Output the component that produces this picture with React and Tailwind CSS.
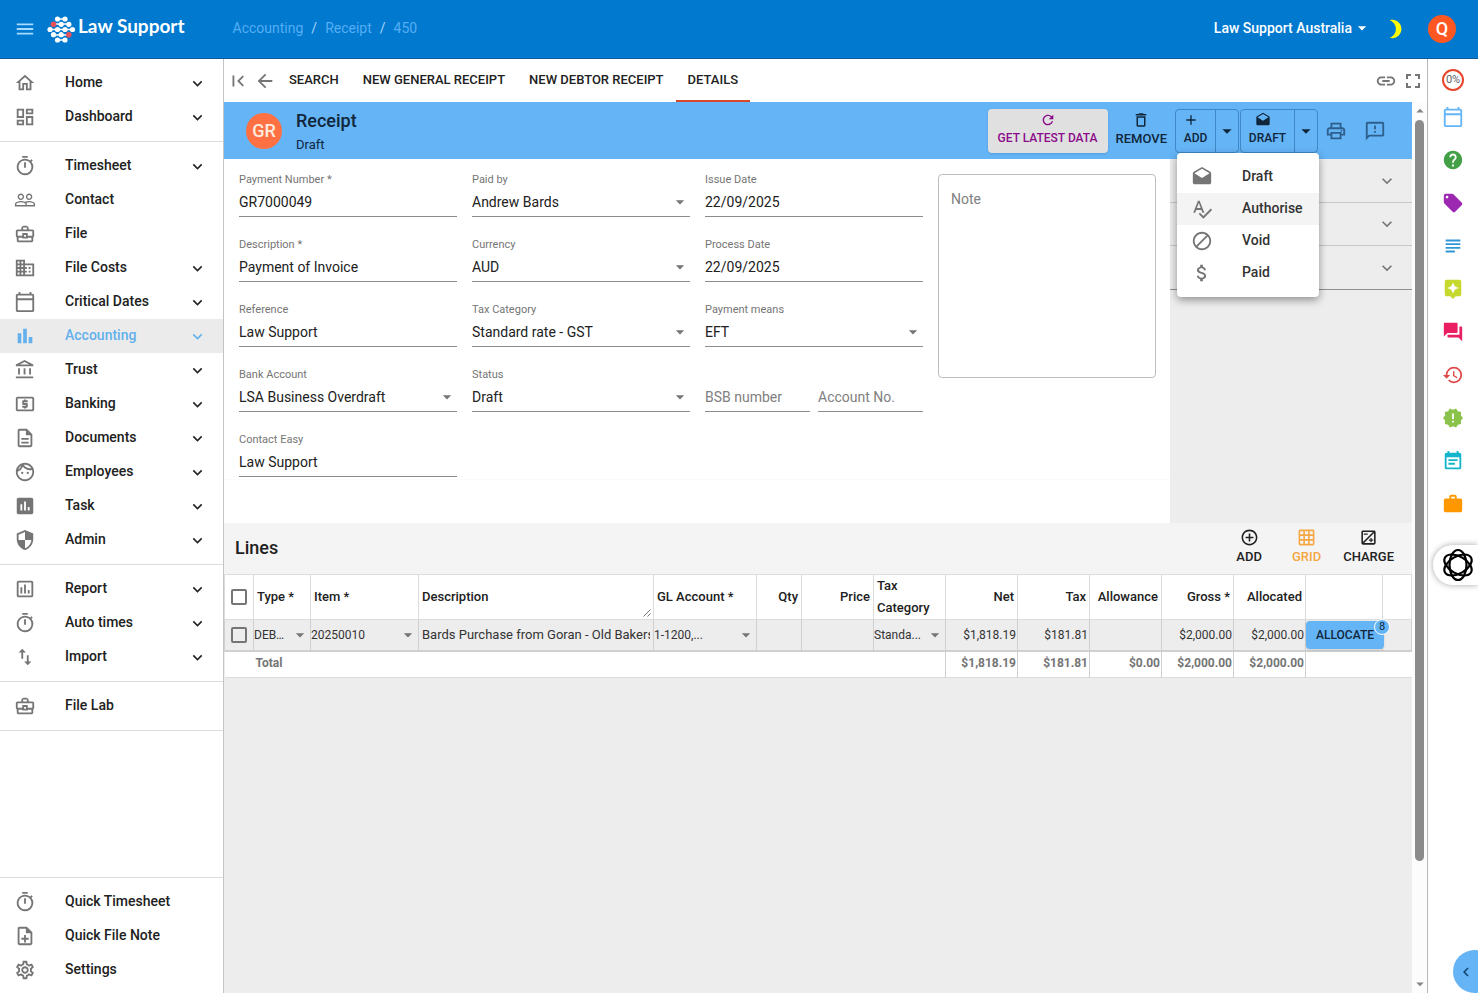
import React, { useState } from 'react';
import {
  MdMenu, MdOutlineHome, MdOutlineDashboard, MdOutlineTimer, MdPeopleOutline, MdOutlineBusinessCenter,
  MdBusiness, MdOutlineCalendarToday, MdBarChart, MdOutlineAccountBalance, MdOutlineLocalAtm,
  MdOutlineDescription, MdOutlineFace, MdAssessment, MdOutlineAssessment, MdSecurity, MdImportExport,
  MdOutlineNoteAdd, MdOutlineSettings, MdExpandMore, MdFirstPage, MdArrowBack, MdLink, MdFullscreen,
  MdRefresh, MdDeleteOutline, MdAdd, MdDrafts, MdArrowDropDown, MdArrowDropUp, MdOutlinePrint,
  MdOutlineFeedback, MdSpellcheck, MdDoNotDisturbAlt, MdAttachMoney, MdBrightness3, MdHelp, MdLocalOffer,
  MdSubject, MdAssistant, MdQuestionAnswer, MdHistory, MdNewReleases, MdEventNote, MdWork,
  MdControlPoint, MdGridOn, MdOutlineExposure, MdChevronLeft,
} from 'react-icons/md';

const navSections = [
  [
    { label: 'Home', icon: MdOutlineHome, expands: true },
    { label: 'Dashboard', icon: MdOutlineDashboard, expands: true },
  ],
  [
    { label: 'Timesheet', icon: MdOutlineTimer, expands: true },
    { label: 'Contact', icon: MdPeopleOutline },
    { label: 'File', icon: MdOutlineBusinessCenter },
    { label: 'File Costs', icon: MdBusiness, expands: true },
    { label: 'Critical Dates', icon: MdOutlineCalendarToday, expands: true },
    { label: 'Accounting', icon: MdBarChart, expands: true, active: true },
    { label: 'Trust', icon: MdOutlineAccountBalance, expands: true },
    { label: 'Banking', icon: MdOutlineLocalAtm, expands: true },
    { label: 'Documents', icon: MdOutlineDescription, expands: true },
    { label: 'Employees', icon: MdOutlineFace, expands: true },
    { label: 'Task', icon: MdAssessment, expands: true },
    { label: 'Admin', icon: MdSecurity, expands: true },
  ],
  [
    { label: 'Report', icon: MdOutlineAssessment, expands: true },
    { label: 'Auto times', icon: MdOutlineTimer, expands: true },
    { label: 'Import', icon: MdImportExport, expands: true },
  ],
  [{ label: 'File Lab', icon: MdOutlineBusinessCenter }],
];

const quickLinks = [
  { label: 'Quick Timesheet', icon: MdOutlineTimer },
  { label: 'Quick File Note', icon: MdOutlineNoteAdd },
  { label: 'Settings', icon: MdOutlineSettings },
];

const railItems = [
  { label: 'Calendar', icon: MdOutlineCalendarToday, color: 'text-[#64b5f6]' },
  { label: 'Help', icon: MdHelp, color: 'text-[#43a047]' },
  { label: 'Tags', icon: MdLocalOffer, color: 'text-[#9c27b0]' },
  { label: 'Notes', icon: MdSubject, color: 'text-[#2f96d8]' },
  { label: 'Assistant', icon: MdAssistant, color: 'text-[#c6d92f]' },
  { label: 'Messages', icon: MdQuestionAnswer, color: 'text-[#e91e63]' },
  { label: 'History', icon: MdHistory, color: 'text-[#e04848]' },
  { label: 'Alerts', icon: MdNewReleases, color: 'text-[#8bc34a]' },
  { label: 'Events', icon: MdEventNote, color: 'text-[#12b5cb]' },
  { label: 'Work', icon: MdWork, color: 'text-[#ff9800]' },
];

const statusOptions = [
  { label: 'Draft', icon: MdDrafts },
  { label: 'Authorise', icon: MdSpellcheck, active: true },
  { label: 'Void', icon: MdDoNotDisturbAlt },
  { label: 'Paid', icon: MdAttachMoney },
];

const NavItem = ({ label, icon: Icon, expands, active }) => (
  <a
    href="#"
    className={`flex h-[34px] items-center pl-3.5 pr-4 text-sm font-medium ${active ? 'bg-[#ebebeb] text-[#64b0ec]' : 'text-[#212121]'}`}
  >
    <Icon size={22} className={active ? 'text-[#64b0ec]' : 'text-[#757575]'} />
    <span className="ml-[29px] flex-1 pb-0.5">{label}</span>
    {expands && <MdExpandMore size={19} />}
  </a>
);

const Logo = () => (
  <a href="#" className="flex items-center text-white">
    <svg width="29" height="27" viewBox="0 0 29 27" stroke="#fff" strokeWidth="1.6" fill="#fff">
      <path d="M11 3h7M8 8h14M3 13.5h22M8 19h14M11 24h7" />
      <g stroke="none">
        <circle cx="10.5" cy="3" r="2.6" />
        <circle cx="18" cy="3" r="2.6" />
        <circle cx="6.5" cy="8.3" r="2.8" fill="#e8505b" />
        <circle cx="14.2" cy="8.3" r="2.6" />
        <circle cx="21.8" cy="8.3" r="2.6" />
        <circle cx="3" cy="13.5" r="2.6" />
        <circle cx="10.5" cy="13.5" r="2.6" />
        <circle cx="18" cy="13.5" r="2.6" />
        <circle cx="25.5" cy="13.5" r="2.6" />
        <circle cx="6.5" cy="18.7" r="2.6" />
        <circle cx="14.2" cy="18.7" r="2.6" />
        <circle cx="21.8" cy="18.7" r="2.8" fill="#e8505b" />
        <circle cx="10.5" cy="24" r="2.6" />
        <circle cx="18" cy="24" r="2.6" />
      </g>
    </svg>
    <span className="mb-1.5 ml-0.5 font-['Lato'] text-[19px] font-bold">Law Support</span>
  </a>
);

const Header = () => (
  <header className="flex h-[59px] items-center border-b border-[#0b5c9c] bg-[#0079cf] pl-3.5 pr-[22px]">
    <button aria-label="Menu" className="mr-[11px] text-[#a5dcff]"><MdMenu size={22} /></button>
    <Logo />
    <nav aria-label="Breadcrumb" className="ml-12 flex gap-2 pb-0.5 text-sm text-[#55aef5]">
      <a href="#">Accounting</a>
      <span className="text-[#a5d5fa]">/</span>
      <a href="#">Receipt</a>
      <span className="text-[#a5d5fa]">/</span>
      <a href="#">450</a>
    </nav>
    <button className="ml-auto flex items-center pb-0.5 text-sm font-medium text-white">
      Law Support Australia <MdArrowDropDown size={20} />
    </button>
    <button aria-label="Dark mode" className="ml-3 text-[#ffff00]"><MdBrightness3 size={22} /></button>
    <button className="ml-[22px] size-7 rounded-full bg-[#ff5722] text-lg leading-7 font-medium text-white">Q</button>
  </header>
);

const Sidebar = () => (
  <aside className="flex w-56 shrink-0 flex-col border-r border-[#c4c4c4] bg-white">
    <nav>
      {navSections.map((items, i) => (
        <div key={i} className="border-b border-[#dcdcdc] py-[7px]">
          {items.map((item) => <NavItem key={item.label} {...item} />)}
        </div>
      ))}
    </nav>
    <nav className="mt-auto border-t border-[#dcdcdc] pt-[7px] pb-1.5">
      {quickLinks.map((item) => <NavItem key={item.label} {...item} />)}
    </nav>
  </aside>
);

const Tabs = () => (
  <div className="flex h-[43px] items-stretch pl-[3px] pr-0.5 text-[13px] font-medium text-[#212121]">
    <button aria-label="First" className="text-[#757575]"><MdFirstPage size={22} /></button>
    <button aria-label="Back" className="mr-px ml-[5px] text-[#757575]"><MdArrowBack size={22} /></button>
    <a href="#" className="px-3 leading-[42px]">SEARCH</a>
    <a href="#" className="px-3 leading-[42px]">NEW GENERAL RECEIPT</a>
    <a href="#" className="px-3 leading-[42px]">NEW DEBTOR RECEIPT</a>
    <a href="#" className="border-b-2 border-[#d6492a] px-3 leading-[42px]">DETAILS</a>
    <button aria-label="Copy link" className="ml-auto text-[#757575]"><MdLink size={22} /></button>
    <button aria-label="Full screen" className="ml-1 text-[#757575]"><MdFullscreen size={24} /></button>
  </div>
);

const StatusMenu = () => (
  <ul role="menu" className="absolute top-full -right-px z-10 w-[142px] rounded bg-white py-2 shadow-[0_3px_8px_rgba(0,0,0,0.4)]">
    {statusOptions.map(({ label, icon: Icon, active }) => (
      <li key={label} role="none">
        <button
          role="menuitem"
          className={`flex h-8 w-full items-center pl-3.5 text-sm text-[#333] ${active ? 'bg-[#f4f4f4]' : ''}`}
        >
          <Icon size={22} className="text-[#757575]" />
          <span className="ml-[29px] pb-0.5">{label}</span>
        </button>
      </li>
    ))}
  </ul>
);

const ActionBar = () => {
  const [open, setOpen] = useState(true);

  return (
    <div className="flex h-[57px] items-center bg-[#64b4f6] pt-px pl-[22px] pr-[26px] text-[#10263b]">
      <div className="size-9 rounded-full bg-[#ff7043] text-center text-lg leading-9 font-medium text-[#ffeadf]">GR</div>
      <div className="ml-3.5 flex-1 pt-1">
        <h1 className="text-lg leading-6 font-medium">Receipt</h1>
        <p className="text-[13px] leading-6">Draft</p>
      </div>
      <div className="flex items-center text-xs leading-4 font-medium">
        <button className="flex h-11 flex-col items-center gap-0.5 rounded bg-[#e0e0e0] px-2.5 pt-[3px] text-[#8b0a8b] shadow">
          <MdRefresh size={16} />
          GET LATEST DATA
        </button>
        <button className="mx-2 flex flex-col items-center gap-0.5 pb-1 text-[13px]">
          <MdDeleteOutline size={18} />
          REMOVE
        </button>
        <div className="flex h-11 divide-x divide-[#3f88c5] rounded border border-[#3f88c5]">
          <button className="flex w-10 flex-col items-center gap-0.5 pt-0.5">
            <MdAdd size={16} className="mr-2.5" />
            ADD
          </button>
          <button aria-label="More add options" className="w-[22px]"><MdArrowDropDown size={22} /></button>
        </div>
        <div className="relative ml-px">
          <div className="flex h-11 divide-x divide-[#3f88c5] rounded border border-[#3f88c5]">
            <button className="flex w-[54px] flex-col items-center gap-0.5 pt-0.5">
              <MdDrafts size={16} className="mr-2.5" />
              DRAFT
            </button>
            <button aria-label="Change status" className="w-[22px]" onClick={() => setOpen(!open)}>
              <MdArrowDropDown size={22} />
            </button>
          </div>
          {open && <StatusMenu />}
        </div>
        <button aria-label="Print" className="ml-[7px] text-[#2e5f8c]"><MdOutlinePrint size={22} /></button>
        <button aria-label="Feedback" className="ml-[17px] text-[#2e5f8c]"><MdOutlineFeedback size={22} /></button>
      </div>
    </div>
  );
};

const TextField = ({ id, label, value }) => (
  <div>
    <label htmlFor={id} className="block h-4 text-[11px] leading-4 text-[#757575]">{label}</label>
    <input id={id} defaultValue={value} className="block h-[29px] w-full border-b border-[#8c8c8c] text-sm text-[#212121] outline-none" />
  </div>
);

const SelectField = ({ id, label, value }) => (
  <div>
    <label htmlFor={id} className="block h-4 text-[11px] leading-4 text-[#757575]">{label}</label>
    <div className="flex items-center border-b border-[#8c8c8c]">
      <select id={id} className="h-7 min-w-0 flex-1 appearance-none text-sm text-[#212121] outline-none">
        <option>{value}</option>
      </select>
      <MdArrowDropDown size={20} className="pointer-events-none text-[#757575]" />
    </div>
  </div>
);

const BlankField = ({ label }) => (
  <input
    aria-label={label}
    placeholder={label}
    className="mt-4 h-[29px] w-full min-w-0 border-b border-[#8c8c8c] text-sm outline-none placeholder:text-[#808080]"
  />
);

const ReceiptForm = () => (
  <form className="min-w-0 flex-1 bg-white">
    <div className="grid grid-cols-4 gap-x-[15px] gap-y-5 pt-[13px] pr-3.5 pl-[15px]">
      <TextField id="number" label="Payment Number *" value="GR7000049" />
      <SelectField id="paidBy" label="Paid by" value="Andrew Bards" />
      <TextField id="issueDate" label="Issue Date" value="22/09/2025" />
      <textarea
        aria-label="Note"
        placeholder="Note"
        className="row-span-4 mt-0.5 h-[204px] resize-none rounded border border-[#bdbdbd] px-3 py-3.5 text-sm outline-none placeholder:text-[#808080]"
      />
      <TextField id="description" label="Description *" value="Payment of Invoice" />
      <SelectField id="currency" label="Currency" value="AUD" />
      <TextField id="processDate" label="Process Date" value="22/09/2025" />
      <TextField id="reference" label="Reference" value="Law Support" />
      <SelectField id="taxCategory" label="Tax Category" value="Standard rate - GST" />
      <SelectField id="means" label="Payment means" value="EFT" />
      <SelectField id="bank" label="Bank Account" value="LSA Business Overdraft" />
      <SelectField id="status" label="Status" value="Draft" />
      <div className="flex gap-2">
        <BlankField label="BSB number" />
        <BlankField label="Account No." />
      </div>
      <TextField id="contact" label="Contact Easy" value="Law Support" />
    </div>
    <div className="mt-0.5 h-11 border-t border-[#fafafa]" />
  </form>
);

const SidePanels = () => (
  <aside className="w-[242px] shrink-0 bg-[#ededed] pt-px">
    {['Details', 'Notes', 'History'].map((name) => (
      <button
        key={name}
        aria-label={name}
        className="flex h-[43px] w-full items-center justify-end border-b border-[#c8c8c8] pr-[15px] text-[#757575] last:h-11 last:border-[#909090]"
      >
        <MdExpandMore size={20} />
      </button>
    ))}
  </aside>
);

const LinesToolbar = () => (
  <div className="flex h-[51px] items-center bg-[#f4f4f4] pl-[11px] pr-[18px] pb-0.5 text-[13px] leading-5 font-medium text-[#212121]">
    <h2 className="flex-1 text-lg">Lines</h2>
    <div className="flex gap-[30px]">
      <button className="flex flex-col items-center"><MdControlPoint size={19} />ADD</button>
      <button className="flex flex-col items-center text-[#f5a742]"><MdGridOn size={19} />GRID</button>
      <button className="-ml-2 flex flex-col items-center"><MdOutlineExposure size={19} />CHARGE</button>
    </div>
  </div>
);

const Checkbox = ({ label }) => (
  <input type="checkbox" aria-label={label} className="mx-auto block size-4 appearance-none rounded-xs border-2 border-[#757575]" />
);

const CellSelect = ({ label, value }) => (
  <div className="flex items-center">
    <select aria-label={label} className="h-7 min-w-0 flex-1 appearance-none text-ellipsis outline-none">
      <option>{value}</option>
    </select>
    <MdArrowDropDown size={20} className="pointer-events-none shrink-0 text-[#757575]" />
  </div>
);

const LinesTable = () => (
  <table className="w-full table-fixed border-collapse text-xs text-[#333] [&_td]:border-x [&_td]:border-[#d0d0d0] [&_th]:border [&_th]:border-[#dcdcdc]">
    <colgroup>
      <col className="w-[29px]" />
      <col className="w-[57px]" />
      <col className="w-[108px]" />
      <col />
      <col className="w-[103px]" />
      <col className="w-[45px]" />
      <col className="w-[72px]" />
      <col className="w-[72px]" />
      <col className="w-[72px]" />
      <col className="w-[72px]" />
      <col className="w-[72px]" />
      <col className="w-[72px]" />
      <col className="w-[72px]" />
      <col className="w-[77px]" />
      <col className="w-[29px]" />
    </colgroup>
    <thead className="bg-white text-[13px] text-[#212121] [&_th]:px-[3px] [&_th]:font-medium">
      <tr className="h-[45px] text-left">
        <th><Checkbox label="Select all lines" /></th>
        <th>Type *</th>
        <th>Item *</th>
        <th className="relative">
          Description
          <svg width="8" height="8" viewBox="0 0 8 8" stroke="#757575" className="absolute right-0.5 bottom-0.5">
            <path d="M0.5 7.5l7-7M4.5 7.5l3-3" />
          </svg>
        </th>
        <th>GL Account *</th>
        <th className="text-right">Qty</th>
        <th className="text-right">Price</th>
        <th className="leading-[22px]">Tax Category</th>
        <th className="text-right">Net</th>
        <th className="text-right">Tax</th>
        <th className="text-right whitespace-nowrap">Allowance</th>
        <th className="text-right">Gross *</th>
        <th className="text-right">Allocated</th>
        <th aria-label="Actions" />
        <th aria-label="More" />
      </tr>
    </thead>
    <tbody>
      <tr className="h-[31px] border-b-2 border-[#d0d0d0] bg-[#ededed] text-right">
        <td><Checkbox label="Select line" /></td>
        <td><CellSelect label="Type" value="DEBTOR" /></td>
        <td><CellSelect label="Item" value="20250010" /></td>
        <td className="px-[3px]">
          <input aria-label="Description" defaultValue="Bards Purchase from Goran - Old Bakersville" className="h-7 w-full text-[13px] outline-none" />
        </td>
        <td><CellSelect label="GL Account" value="1-1200,..." /></td>
        <td />
        <td />
        <td><CellSelect label="Tax Category" value="Standa..." /></td>
        <td className="pr-px">$1,818.19</td>
        <td className="pr-px">$181.81</td>
        <td />
        <td className="pr-px">$2,000.00</td>
        <td className="pr-px">$2,000.00</td>
        <td>
          <div className="relative w-[78px]">
            <button className="h-7 w-full rounded bg-[#64b4f6] text-center font-medium text-[#10263b] shadow">ALLOCATE</button>
            <span className="absolute -top-0.5 -right-1.5 z-10 size-4 rounded-full border border-white bg-[#64b4f6] text-center text-[11px] leading-[14px] text-[#10263b]">8</span>
          </div>
        </td>
        <td />
      </tr>
    </tbody>
    <tfoot>
      <tr className="h-[27px] border-b border-[#dcdcdc] bg-white text-right text-[#757575] [&_td]:pr-px [&_td]:pb-0.5 [&_td]:font-bold">
        <td className="!border-x-0" />
        <td colSpan={7} className="!border-l-0 pl-0.5 text-left">Total</td>
        <td>$1,818.19</td>
        <td>$181.81</td>
        <td>$0.00</td>
        <td>$2,000.00</td>
        <td>$2,000.00</td>
        <td colSpan={2} className="!border-r-0" />
      </tr>
    </tfoot>
  </table>
);

const ScrollTrack = () => (
  <div aria-hidden="true" className="flex w-[15px] shrink-0 flex-col items-center bg-[#fcfcfc] text-[#858585]">
    <MdArrowDropUp size={18} />
    <div className="w-[9px] flex-[741] rounded-full bg-[#8b8b8b]" />
    <div className="flex-[114]" />
    <MdArrowDropDown size={18} />
  </div>
);

const Rail = () => (
  <aside className="relative flex w-[51px] shrink-0 flex-col items-center overflow-hidden border-l border-[#b8b8b8] bg-white pt-2.5">
    <button className="size-[22px] rounded-full border-2 border-[#e8452c] text-[11px] leading-[18px] text-[#616161]">
      <span className="-mx-1">0%</span>
    </button>
    <div className="mt-1 flex flex-col">
      {railItems.map(({ label, icon: Icon, color }) => (
        <button key={label} aria-label={label} className={`flex h-[43px] items-center ${color}`}>
          <Icon size={22} />
        </button>
      ))}
    </div>
    <button aria-label="AI assistant" className="absolute top-[486px] right-0 h-10 w-[45px] rounded-l-full bg-white pl-2 shadow-[0_0_6px_rgba(0,0,0,0.35)]">
      <svg width="34" height="34" viewBox="-17 -17 34 34" fill="none" stroke="#000" strokeWidth="2.2">
        <ellipse rx="8.5" ry="15" />
        <ellipse rx="8.5" ry="15" transform="rotate(60)" />
        <ellipse rx="8.5" ry="15" transform="rotate(120)" />
      </svg>
    </button>
    <button aria-label="Expand panel" className="absolute -right-[18px] bottom-0 size-[43px] rounded-full bg-[#64b4f6] pl-1 text-[#10436e]">
      <MdChevronLeft size={18} />
    </button>
  </aside>
);

const App = () => (
  <div className="flex min-h-screen flex-col bg-white font-['Roboto',sans-serif]">
    <Header />
    <div className="flex flex-1">
      <Sidebar />
      <main className="flex min-w-0 flex-1 flex-col">
        <Tabs />
        <div className="flex flex-1">
          <div className="min-w-0 flex-1 bg-[#ededed]">
            <ActionBar />
            <div className="flex">
              <ReceiptForm />
              <SidePanels />
            </div>
            <LinesToolbar />
            <LinesTable />
          </div>
          <ScrollTrack />
        </div>
      </main>
      <Rail />
    </div>
  </div>
);

export default App;
